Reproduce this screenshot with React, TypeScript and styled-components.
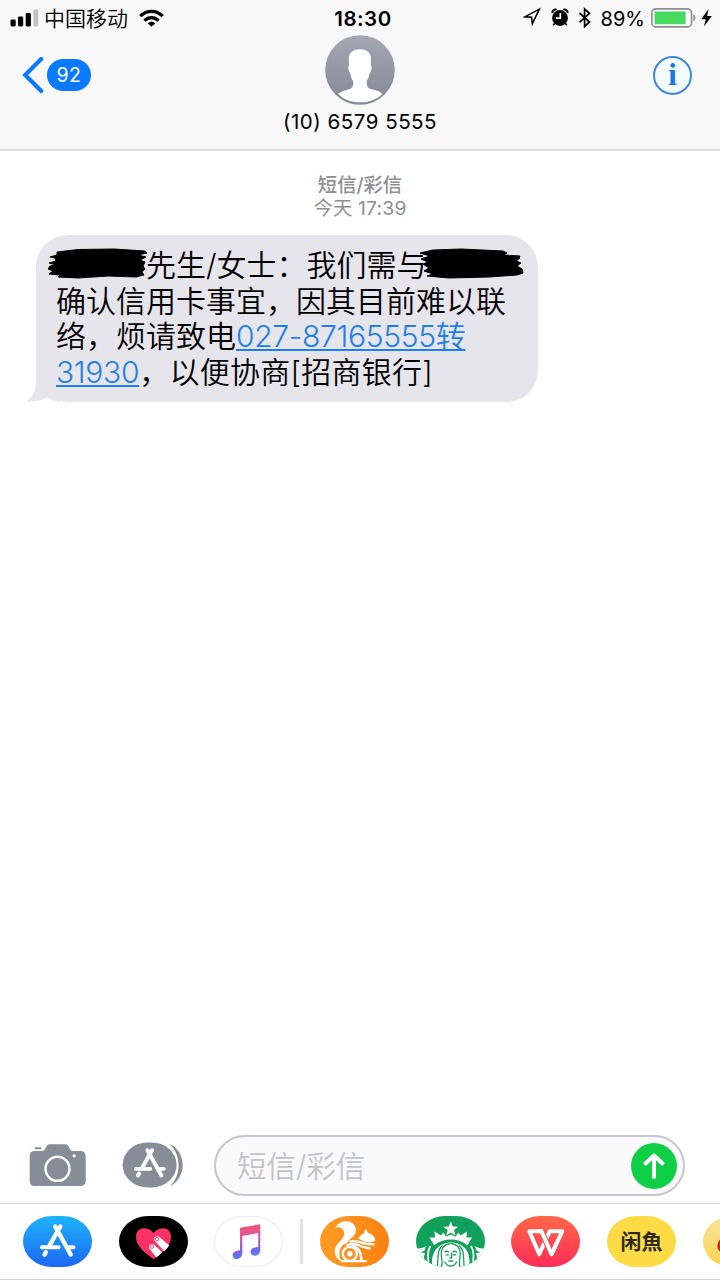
import React from "react";
import styled, { createGlobalStyle } from "styled-components";

const GlobalStyle = createGlobalStyle`
  * { box-sizing: border-box; }
  body { margin: 0; background: #fff; }
`;

const latin = `Inter, "Noto Sans CJK SC", sans-serif`;

const Screen = styled.div`
  width: 720px;
  height: 1280px;
  display: flex;
  flex-direction: column;
  overflow: hidden;
  background: #fff;
  color: #000;
  font-family: ${latin};
`;

const Header = styled.header`
  height: 151px;
  flex: none;
  display: flex;
  flex-direction: column;
  background: #f8f8f9;
  border-bottom: 2px solid #dfdfe0;
`;

const StatusBar = styled.div`
  height: 35px;
  flex: none;
  display: grid;
  grid-template-columns: 1fr auto 1fr;
  align-items: center;
  padding: 1px 8px 0 10px;
`;

const StatusGroup = styled.div<{ $end?: boolean }>`
  display: flex;
  align-items: center;
  justify-content: ${(p) => (p.$end ? "flex-end" : "flex-start")};
`;

const Carrier = styled.span`
  margin: -2px 11px 0 5px;
  font: 350 21px/30px "Noto Sans CJK SC", sans-serif;
`;

const Clock = styled.span`
  font-size: 20.5px;
  font-weight: 600;
  line-height: 30px;
  letter-spacing: 0.5px;
  margin: 1px 0 0 4px;
`;

const Percent = styled.span`
  margin: 1px 6px 0 10px;
  font-size: 20px;
  line-height: 30px;
`;

const NavBar = styled.div`
  flex: 1;
  display: grid;
  grid-template-columns: 1fr auto 1fr;
  padding: 0 28px 0 22px;
`;

const BackButton = styled.div`
  display: flex;
  align-items: center;
  gap: 3px;
  height: 80px;
`;

const UnreadBadge = styled.span`
  width: 44px;
  height: 32px;
  border-radius: 16px;
  background: #0a7aff;
  color: #fff;
  text-align: center;
  font-size: 19.5px;
  line-height: 33px;
  letter-spacing: 0.6px;
`;

const Contact = styled.div`
  display: flex;
  flex-direction: column;
  align-items: center;
  margin-left: 6px;
`;

const ContactName = styled.span`
  font-size: 20.5px;
  line-height: 30px;
  letter-spacing: 0.52px;
  margin-top: 2px;
  white-space: nowrap;
`;

const InfoSlot = styled.div`
  display: flex;
  justify-content: flex-end;
  align-items: center;
  height: 80px;
`;

const InfoButton = styled.span`
  width: 39px;
  height: 39px;
  border: 2px solid #3f87d8;
  border-radius: 50%;
  background: #f1fbff;
  color: #1b78e0;
  text-align: center;
  font: 700 31px/34px "Liberation Serif", serif;
`;

const Conversation = styled.main`
  flex: 1;
  padding-top: 23px;
`;

const Stamp = styled.div`
  text-align: center;
  color: #8e8e93;
  font-size: 19.3px;
  line-height: 23px;
`;

const StampKind = styled.div`
  font-weight: 500;
`;

const StampTime = styled.div`
  font-weight: 400;
  letter-spacing: 0.2px;
`;

const Bubble = styled.div`
  position: relative;
  width: 502px;
  height: 167px;
  margin: 15px 0 0 36px;
  padding: 13px 0 0 20px;
  border-radius: 32px;
  background: #e6e5eb;
`;

const Tail = styled.svg`
  position: absolute;
  left: -11px;
  bottom: -1px;
`;

const Line = styled.div<{ $spacing?: number }>`
  display: flex;
  align-items: center;
  height: 35.5px;
  white-space: nowrap;
  font: 350 30px/35.5px Inter, "Noto Sans CJK SC", sans-serif;
  letter-spacing: ${(p) => p.$spacing ?? 0}px;
`;

const Spacer = styled.span`
  width: 90px;
`;

const Scribble = styled.svg<{ $x: number; $y: number }>`
  position: absolute;
  left: ${(p) => p.$x}px;
  top: ${(p) => p.$y}px;
`;

const PhoneLink = styled.span`
  color: #1f7fe8;
  letter-spacing: -0.31px;
  text-decoration: underline;
  text-decoration-thickness: 2px;
  text-underline-offset: 2px;
  text-decoration-skip-ink: none;
`;

const ComposeBar = styled.div`
  height: 68px;
  flex: none;
  display: flex;
  align-items: flex-start;
  padding-left: 29px;
`;

const CameraIcon = styled.svg`
  margin-top: 9px;
`;

const DrawerIcon = styled.svg`
  margin: 7px 0 0 36px;
`;

const MessageField = styled.div`
  width: 471px;
  height: 61px;
  margin-left: 31px;
  padding: 0 6px 0 21px;
  display: flex;
  align-items: center;
  justify-content: space-between;
  border: 2px solid #c6c5cb;
  border-radius: 31px;
  background: #fafafb;
`;

const Placeholder = styled.span`
  color: #c3c3c7;
  font: 350 29.5px/40px Inter, "Noto Sans CJK SC", sans-serif;
`;

const SendButton = styled.span`
  width: 46px;
  height: 46px;
  border-radius: 50%;
  background: #0fcf47;
  display: flex;
`;

const AppStrip = styled.footer`
  height: 77px;
  flex: none;
  display: flex;
  align-items: flex-start;
  padding: 12px 0 0 23px;
  border-top: 1px solid #dcdcde;
  border-bottom: 1px solid #cfcfd2;
`;

const AppGroup = styled.div`
  display: flex;
  gap: 26.7px;
  flex: none;
`;

const Separator = styled.span`
  width: 3px;
  height: 45px;
  flex: none;
  margin: 3px 17px 0 16.6px;
  background: #e3e2ea;
`;

const AppTile = styled.div<{ $bg: string; $outlined?: boolean }>`
  width: 69px;
  height: 51px;
  flex: none;
  overflow: hidden;
  border-radius: 29px / 25.5px;
  background: ${(p) => p.$bg};
  box-shadow: ${(p) => (p.$outlined ? "inset 0 0 0 1px #ebe9ee" : "none")};
  display: flex;
  align-items: center;
  justify-content: center;
`;

const FishWordmark = styled.span`
  margin-top: -2px;
  color: #30291a;
  font: 700 21px/51px "Noto Sans CJK SC", sans-serif;
`;

const StoreGlyph = () => (
  <g stroke="#fff" strokeLinecap="round" fill="none">
    <path d="M19 31.2H35.5M46 31.2H50.5" strokeWidth="4" />
    <path d="M32.2 10.5L47.7 38.5" strokeWidth="4.4" />
    <path d="M37.3 10.5L26 30.5M22.8 36.3L21.6 38.6" strokeWidth="4.4" />
  </g>
);

export default function App() {
  return (
    <Screen>
      <GlobalStyle />
      <Header>
        <StatusBar>
          <StatusGroup>
            <svg width="29" height="18" viewBox="0 0 29 18">
              <rect x="0.5" y="10.5" width="5.2" height="7" rx="1.4" />
              <rect x="8" y="7.5" width="5.2" height="10" rx="1.4" />
              <rect x="15.7" y="4" width="5.2" height="13.5" rx="1.4" />
              <rect x="23.4" y="0.5" width="5" height="17" rx="1.4" fill="#c2c2c2" />
            </svg>
            <Carrier>中国移动</Carrier>
            <svg width="25" height="18" viewBox="0 0 25 18" fill="none" stroke="#000" strokeWidth="3.3">
              <path d="M1.3 7.2C7.8 0.7 17.2 0.7 23.7 7.2" />
              <path d="M5.4 11.6C9.6 7.6 15.4 7.6 19.6 11.6" />
              <path d="M8.6 14.2C11 12.1 14 12.1 16.4 14.2L12.5 17.8Z" fill="#000" stroke="none" />
            </svg>
          </StatusGroup>
          <Clock>18:30</Clock>
          <StatusGroup $end>
            <svg width="68" height="22" viewBox="0 0 68 22">
              <path d="M1.8 9.8L16.3 2.2L9.3 16.8L8.6 10.2Z" fill="none" stroke="#000" strokeWidth="1.5" strokeLinejoin="miter" />
              <circle cx="37" cy="11" r="7.9" />
              <path d="M29.4 6.2C29.2 3.7 31 2.2 33.6 2.5M44.6 6.2C44.8 3.7 43 2.2 40.4 2.5" fill="none" stroke="#000" strokeWidth="2" />
              <path d="M37.3 6V11.2H33" fill="none" stroke="#fff" strokeWidth="1.7" />
              <path d="M31.5 16.5L30.3 18.4M42.5 16.5L43.7 18.4" stroke="#000" strokeWidth="1.6" />
              <path d="M56.5 6L66.5 15L61.6 19.5V2L66.5 6.3L56.5 15.4" fill="none" stroke="#000" strokeWidth="1.7" />
            </svg>
            <Percent>89%</Percent>
            <svg width="61" height="20" viewBox="0 0 61 20">
              <rect x="0.9" y="0.9" width="39.6" height="18" rx="4" fill="#fff" stroke="#8d8d8f" strokeWidth="1.6" />
              <rect x="3.6" y="3.5" width="31" height="12.8" rx="1" fill="#45d960" />
              <path d="M42.3 6.3C45 7 45 12.5 42.3 13.2Z" fill="#8d8d8f" />
              <path d="M57.5 1L50.3 11.2H54.8L53 18.5L60.8 7.9H56.1Z" />
            </svg>
          </StatusGroup>
        </StatusBar>
        <NavBar>
          <BackButton>
            <svg width="22" height="38" viewBox="0 0 22 38" fill="none" stroke="#0a7aff" strokeWidth="4.2" strokeLinecap="round" strokeLinejoin="miter">
              <path d="M19.2 3L3.2 19L19.2 35" />
            </svg>
            <UnreadBadge>92</UnreadBadge>
          </BackButton>
          <Contact>
            <svg width="70" height="70" viewBox="0 0 70 70">
              <defs>
                <linearGradient id="avatar" x2="0" y2="1">
                  <stop stopColor="#a3a7b4" />
                  <stop offset="1" stopColor="#858996" />
                </linearGradient>
              </defs>
              <circle cx="35" cy="35" r="34.8" fill="url(#avatar)" />
              <path d="M35 14.2C43 14.2 46.2 18.5 46 25L45.7 30.3C47.3 30.7 46.6 36.5 44.4 38.8C44 42.5 42.6 44.4 41.8 46C41.4 50 42.2 52.8 45 53.8C49.5 55.4 55.2 55.7 57.2 59.2C51 65 43.7 67.3 35 67.3C26.3 67.3 19 65 13.2 58.8C16.5 55.8 21.5 55.3 25.5 53.7C28 52.5 28.7 50 28.2 46C26.8 44.3 25.8 42 25.4 38.7C23.2 36 22.6 30.8 24.2 30.2L23.8 25C23.6 18.5 27 14.2 35 14.2Z" fill="#fff" />
            </svg>
            <ContactName>(10) 6579 5555</ContactName>
          </Contact>
          <InfoSlot>
            <InfoButton>i</InfoButton>
          </InfoSlot>
        </NavBar>
      </Header>

      <Conversation>
        <Stamp>
          <StampKind>短信/彩信</StampKind>
          <StampTime>今天 17:39</StampTime>
        </Stamp>
        <Bubble>
          <Tail width="36" height="28" viewBox="0 0 36 28">
            <path d="M11 0C11.5 14 9 22 1 26.5C8 27.5 16 26 22 22.5C26 25 31 26.8 36 27L15 0Z" fill="#e6e5eb" />
          </Tail>
          <Line>
            <Spacer />
            先生/女士：我们需与
          </Line>
          <Line>确认信用卡事宜，因其目前难以联</Line>
          <Line>
            络，烦请致电<PhoneLink>027-87165555转</PhoneLink>
          </Line>
          <Line $spacing={0.25}>
            <PhoneLink>31930</PhoneLink>，以便协商[招商银行]
          </Line>
          <Scribble $x={12} $y={13} width="102" height="32" viewBox="0 0 102 32">
            <path d="M9 4L30 1.5L66 1L97 3L99 5L90 7L98 9L92 12L97 14L95 18L97 21L94 24L96 27L88 29L60 28L30 30L10 29L12 27L1 26L5 23L0 21L2 18L8 17L1 15L8 13L7 10L2 9L9 7Z" stroke="#000" strokeLinejoin="round" />
          </Scribble>
          <Scribble $x={383} $y={13} width="106" height="32" viewBox="0 0 106 32">
            <path d="M1 5L14 2L42 1L84 3L88 5L85 7L101 8L100 11L97 13L102 15L98 18L103 21L104 25L98 27L70 29L30 30L8 28L14 26L5 23L10 20L4 16L9 14L2 11L11 8Z" stroke="#000" strokeLinejoin="round" />
          </Scribble>
        </Bubble>
      </Conversation>

      <ComposeBar>
        <CameraIcon width="57" height="43" viewBox="0 0 57 43">
          <path d="M6 7H14C16 7 17 1 20 0.3H37C40 1 41 7 43 7H51C55 7 56.7 9 56.7 13V36C56.7 40 55 42 51 42H6C2 42 0.7 40 0.7 36V13C0.7 9 2 7 6 7Z" fill="#868d97" />
          <path d="M6.5 4.3H11.5" stroke="#868d97" strokeWidth="2" strokeLinecap="round" />
          <circle cx="28.5" cy="24.8" r="12" fill="none" stroke="#fff" strokeWidth="2.4" />
          <circle cx="45.2" cy="11.9" r="1.6" fill="#fff" />
        </CameraIcon>
        <DrawerIcon width="61" height="46" viewBox="0 0 61 46">
          <rect x="0.6" y="0.4" width="54" height="45" rx="25" ry="22.5" fill="#868d97" />
          <path d="M47.5 2C65 9 65 37 47.5 44.5C59.5 34 59.5 13 47.5 2Z" fill="#868d97" />
          <g transform="translate(-3.5 -1.2) scale(.9)">
            <StoreGlyph />
          </g>
        </DrawerIcon>
        <MessageField>
          <Placeholder>短信/彩信</Placeholder>
          <SendButton>
            <svg width="46" height="46" viewBox="0 0 46 46" fill="none" stroke="#fff" strokeWidth="4" strokeLinecap="round" strokeLinejoin="round">
              <path d="M23 34V13M14.5 20.5L23 12.5L31.5 20.5" />
            </svg>
          </SendButton>
        </MessageField>
      </ComposeBar>

      <AppStrip>
        <AppGroup>
          <AppTile $bg="linear-gradient(#1eb4fb, #1b68f3)">
            <svg width="69" height="51" viewBox="0 0 69 51">
              <StoreGlyph />
            </svg>
          </AppTile>
          <AppTile $bg="#000">
            <svg width="69" height="51" viewBox="0 0 69 51">
              <path d="M34.5 43.3C25 36 17 30 17 21C17 15.5 20.5 12.3 25 12.3C29.5 12.3 32.5 14.5 34.5 17.2C36.5 14.5 39.5 12.3 44 12.3C48.5 12.3 52 15.5 52 21C52 30 44 36 34.5 43.3Z" fill="#fc3168" />
              <path d="M30.2 32.2C29 28.5 33.2 26.5 35.6 29L43.3 36.6L37.4 41.6ZM35.2 24.3C34.2 20.8 38 18.8 40.6 21.3L50.2 29.3C48.8 31.8 47.2 33.6 45.2 35.3Z" fill="#fff" />
              <circle cx="33" cy="30.6" r="1.7" fill="#fff" stroke="#fc3168" strokeWidth="0.9" />
              <circle cx="38" cy="23" r="1.7" fill="#fff" stroke="#fc3168" strokeWidth="0.9" />
            </svg>
          </AppTile>
          <AppTile $bg="#fff" $outlined>
            <svg width="69" height="51" viewBox="0 0 69 51">
              <defs>
                <linearGradient id="note" gradientUnits="userSpaceOnUse" x1="30" y1="9" x2="38" y2="43">
                  <stop stopColor="#f9536f" />
                  <stop offset="0.35" stopColor="#d6599f" />
                  <stop offset="0.7" stopColor="#7a60ea" />
                  <stop offset="1" stopColor="#4a8ff2" />
                </linearGradient>
              </defs>
              <path d="M26 11.8L46.3 8.2V33.5C46.3 41 37 41.8 36.6 36.3C36.4 31.5 41.5 31.5 44.2 31V17L28.3 20V37C28.3 44.3 19 45 18.6 39.5C18.5 35 23.5 35 26 34.3Z" fill="url(#note)" />
            </svg>
          </AppTile>
        </AppGroup>
        <Separator />
        <AppGroup>
          <AppTile $bg="linear-gradient(90deg, #ff9c24, #fd8112)">
            <svg width="69" height="51" viewBox="0 0 69 51">
              <path d="M15.3 11.8C18 7 22 5.2 26 5.2C32 5.2 36.3 9.5 36 15C35.5 20.5 29 22 27.5 27C24 27.5 21.5 30 20 33C19 37 19 41 21.5 45.7C16 43 14 38 15 33C16.5 26.5 24 24 24.2 17.5C24.2 12.5 19.5 10.2 15.3 11.8Z" fill="#fff" />
              <path d="M38 22.3C39.5 20.5 42 18 43.6 17.5L46 12.5L47.9 16.8C52 18 55.2 21 55.3 24.6C51 27.6 45 26.8 38 22.3Z" fill="#fff" />
              <g fill="none" stroke="#fff" strokeWidth="2.3">
                <path d="M29.5 25.8C37 22.5 43 29.8 54.5 28.2" />
                <path d="M26.5 29.5C37 24.5 41 33 50.5 32.2" />
                <path d="M31 29.8C39 31.5 41 36 41.5 45" strokeWidth="2.6" />
                <circle cx="29.8" cy="37.8" r="7" />
              </g>
              <circle cx="29.8" cy="37.8" r="2.8" fill="#fff" />
              <path d="M20.5 44H46C47 44 47.3 46 46 46.2H22Z" fill="#fff" />
            </svg>
          </AppTile>
          <AppTile $bg="#12a15c">
            <svg width="69" height="51" viewBox="0 0 69 51">
              <path d="M34.8 5.2L36.7 10.5L42.3 10.7L37.9 14.1L39.4 19.6L34.8 16.4L30.2 19.6L31.7 14.1L27.3 10.7L32.9 10.5Z" fill="#fff" />
              <path d="M18.5 15.5L25 19.5L27.3 16.5L30 20.7L34.7 18.5L39.5 20.7L42.2 16.5L44.5 19.5L51 15.5L50.5 21.5L56 21.5L51.3 29.3C43 21.5 27 21.5 18.2 29.3L13.5 21.5L19 21.5Z" fill="#fff" />
              <path d="M17 52C14.5 44 17 34.5 23.5 30C30 25.3 40 25.3 46.5 30C53 34.5 55 44 52.5 52Z" fill="#fff" />
              <path d="M0 32C4 33 7 32 10 30L8.5 34.5L4.5 36.5L9 37L8 41L10 51H0ZM69 32C65 33 62 32 59 30L60.5 34.5L64.5 36.5L60 37L61 41L59 51H69Z" fill="#fff" />
              <path d="M14.5 30C9.5 37 13.5 41 12 51M55 30C60 37 56 41 57.5 51" stroke="#fff" strokeWidth="1.8" fill="none" />
              <g fill="none" stroke="#12a15c" strokeWidth="1.3">
                <path d="M34.5 27.5C27.5 28.5 25 32.5 25.3 38C25.3 43 27 46 25.5 51M35 27.5C42 28.5 44.5 32.5 44.2 38C44.2 43 42.5 46 44 51" />
                <path d="M26.5 29.5C20.5 34 22.5 42 21.3 51M43 29.5C49 34 47 42 48.2 51" />
                <path d="M28.5 36.3C30 35 31.8 35.2 33 36.2M36.6 36.2C37.8 35.2 39.6 35 41 36.3M29.5 38.8H32.8M36.8 38.8H40.1M35.6 36.5V42H33.6M32.3 45H37.4M28.5 45.5C31 49.3 32 50 34.8 50C37.6 50 38.6 49.3 41 45.5" />
              </g>
            </svg>
          </AppTile>
          <AppTile $bg="linear-gradient(#ff6848, #fd2d58)">
            <svg width="69" height="51" viewBox="0 0 69 51" fill="none" strokeLinejoin="round">
              <path d="M30.5 15.2H18.3L28.2 38.2L38.8 15.2H51.3L40.6 38.2" stroke="#fff" strokeWidth="4" />
              <path d="M30.5 15.2L40.6 38.2" stroke="#fe4b50" strokeWidth="6" />
              <path d="M30.5 15.2L40.6 38.2" stroke="#fff" strokeWidth="4" strokeLinecap="round" />
              <path d="M40.6 38.2L46 26.5" stroke="#fff" strokeWidth="4" />
              <path d="M29 15.2H27" stroke="#fff" strokeWidth="4" />
            </svg>
          </AppTile>
          <AppTile $bg="#fddb45">
            <FishWordmark>闲魚</FishWordmark>
          </AppTile>
          <AppTile $bg="linear-gradient(#f8e3a0, #fbd44d)">
            <svg width="69" height="51" viewBox="0 0 69 51">
              <path d="M34 17C22 17 14 23 14.5 31C15 37 25 40 34 40Z" fill="#d8200e" />
            </svg>
          </AppTile>
        </AppGroup>
      </AppStrip>
    </Screen>
  );
}
